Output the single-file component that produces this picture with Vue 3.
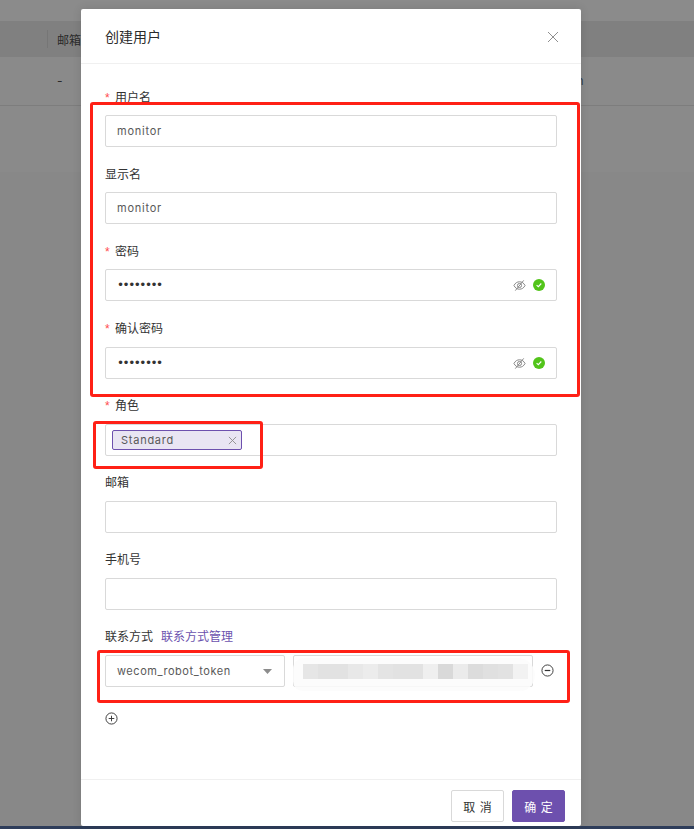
<script setup>
const blurBlocks = ['#e6e6e6','#e2e2e2','#e2e2e2','#e8e8e8','#ececec','#e4e4e4','#e2e2e2','#e2e2e2','#efefef','#d9d9d9','#ebebeb','#dcdcdc','#e0e0e0','#e2e2e2','#f2f2f2']
</script>

<template>
  <div class="page">
    <div class="bg">
      <div class="bg-top"></div>
      <div class="bg-head"><span class="bg-sep"></span><span>邮箱</span></div>
      <div class="bg-row"><span>-</span><span class="bg-tail">n</span></div>
      <div class="bg-empty"></div>
    </div>
    <div class="taskbar"></div>

    <section class="modal">
      <header class="modal-head">
        <h2>创建用户</h2>
        <svg class="close" viewBox="0 0 12 12" width="12" height="12"><path d="M1 1l10 10M11 1L1 11" stroke="#8f8f8f" stroke-width="1" fill="none"/></svg>
      </header>

      <div class="modal-body">
        <div class="field">
          <label class="req">用户名</label>
          <div class="input">monitor</div>
        </div>
        <div class="field">
          <label>显示名</label>
          <div class="input">monitor</div>
        </div>
        <div class="field tall">
          <label class="req">密码</label>
          <div class="input pass">
            <span class="dots">••••••••</span>
            <svg class="eye" viewBox="0 0 14 14" width="13" height="13"><path d="M1 7c1.5-2.8 3.500-4 6-4s4.500 1.200 6 4c-1.500 2.800-3.500 4-6 4s-4.500-1.200-6-4z" stroke="#808080" fill="none"/><circle cx="7" cy="7" r="2.200" stroke="#808080" fill="none"/><path d="M2.500 12.500L11.500 1.500" stroke="#808080" fill="none"/></svg>
            <svg class="ok" viewBox="0 0 12 12" width="12" height="12"><circle cx="6" cy="6" r="6" fill="#52c41a"/><path d="M3.600 6.100l1.700 1.600 3-3.200" stroke="#fff" stroke-width="1.100" fill="none"/></svg>
          </div>
        </div>
        <div class="field up">
          <label class="req">确认密码</label>
          <div class="input pass">
            <span class="dots">••••••••</span>
            <svg class="eye" viewBox="0 0 14 14" width="13" height="13"><path d="M1 7c1.5-2.8 3.500-4 6-4s4.500 1.200 6 4c-1.500 2.800-3.500 4-6 4s-4.500-1.200-6-4z" stroke="#808080" fill="none"/><circle cx="7" cy="7" r="2.200" stroke="#808080" fill="none"/><path d="M2.500 12.500L11.500 1.500" stroke="#808080" fill="none"/></svg>
            <svg class="ok" viewBox="0 0 12 12" width="12" height="12"><circle cx="6" cy="6" r="6" fill="#52c41a"/><path d="M3.600 6.100l1.700 1.600 3-3.200" stroke="#fff" stroke-width="1.100" fill="none"/></svg>
          </div>
        </div>
        <div class="field up">
          <label class="req">角色</label>
          <div class="input tagbox">
            <span class="tag">
              <span>Standard</span>
              <svg viewBox="0 0 10 10" width="9" height="9"><path d="M1 1l8 8M9 1L1 9" stroke="#8c8c8c" fill="none"/></svg>
            </span>
          </div>
        </div>
        <div class="field up">
          <label>邮箱</label>
          <div class="input"></div>
        </div>
        <div class="field up">
          <label>手机号</label>
          <div class="input"></div>
        </div>
        <div class="field contact up">
          <label>联系方式<a class="link">联系方式管理</a></label>
          <div class="contact-row">
            <div class="input select">
              <span>wecom_robot_token</span>
              <svg viewBox="0 0 9 5" width="9" height="5"><path d="M0 0h9L4.500 5z" fill="#8c8c8c"/></svg>
            </div>
            <div class="input token">
              <div class="blob"></div>
              <div class="blocks">
                <i v-for="(c, i) in blurBlocks" :key="i" :style="{ background: c }"></i>
              </div>
            </div>
            <svg class="round minus" viewBox="0 0 14 14" width="13" height="13"><circle cx="7" cy="7" r="6" stroke="#333" fill="none"/><path d="M4 7h6" stroke="#333" stroke-width="1.300"/></svg>
          </div>
        </div>
        <svg class="round add" viewBox="0 0 14 14" width="13" height="13"><circle cx="7" cy="7" r="6" stroke="#333" fill="none"/><path d="M4 7h6M7 4v6" stroke="#333"/></svg>
      </div>

      <footer class="modal-foot">
        <button class="btn">取 消</button>
        <button class="btn primary">确 定</button>
      </footer>
    </section>

    <div class="mark mark-a"></div>
    <div class="mark mark-b"></div>
    <div class="mark mark-c"></div>
  </div>
</template>

<style scoped>
.page {
  position: relative;
  width: 694px;
  height: 829px;
  overflow: hidden;
  background: #888;
  font-family: Inter, "Noto Sans CJK SC", sans-serif;
  font-size: 12px;
  color: #333;
}
.bg { display: flex; flex-direction: column; color: #2a2a2a; }
.bg-top { height: 21px; background: #8b8b8b; }
.bg-head {
  height: 36px; background: #808080; display: flex; align-items: center;
  padding-left: 47px; gap: 9px;
}
.bg-sep { width: 1px; height: 18px; background: #767676; }
.bg-row {
  height: 49px; background: #8a8a8a; border-bottom: 1px solid #7d7d7d;
  display: flex; align-items: center; padding: 0 0 2px 57px; position: relative;
  box-sizing: border-box;
}
.bg-tail { margin-left: 514px; color: #33404f; }
.bg-empty { height: 66px; background: #8a8a8a; }
.taskbar { position: absolute; left: 0; right: 0; bottom: 0; height: 3px; background: #2e3d5a; }

.modal {
  position: absolute; left: 81px; top: 9px; width: 500px; height: 817px;
  background: #fff; border-radius: 2px; display: flex; flex-direction: column;
  box-shadow: 0 0 10px rgba(0,0,0,.12);
}
.modal-head {
  height: 54px; flex: none; border-bottom: 1px solid #f0f0f0; box-sizing: content-box;
  display: flex; align-items: center; justify-content: space-between; padding: 0 22px 0 24px;
}
.modal-head h2 { margin: 0; font-size: 14px; font-weight: 400; color: #2b2b2b; }
.close { margin-top: 2px; }
.modal-body { flex: 1; padding: 21px 24px 0; display: flex; flex-direction: column; }
.field { margin-bottom: 15px; }
.field.tall { margin-bottom: 16px; }
.field label {
  display: flex; align-items: center; height: 22px; margin-bottom: 8px; font-size: 12px; color: #333; position: relative;
}
.field.up label { height: 20px; margin-bottom: 10px; }
.req::before {
  content: "*"; color: #ff4d4f; font-size: 12px; width: 10px; font-family: "Liberation Sans", sans-serif; padding-top: 3px;
}
.input {
  box-sizing: border-box; height: 32px; border: 1px solid #d9d9d9; border-radius: 2px;
  padding: 0 11px; display: flex; align-items: center; font-size: 11px; letter-spacing: .75px; color: #595959;
}
.pass .dots { flex: 1; color: #333; font-size: 12px; letter-spacing: -1.500px; font-family: "DejaVu Sans", sans-serif; }
.eye { margin-right: 7px; }
.tagbox { padding: 0 6px; }
.tag {
  box-sizing: border-box; width: 130px; height: 20px; background: #e9e5f3; border: 1px solid #6d50ae; border-radius: 2px;
  display: flex; align-items: center; justify-content: space-between; padding: 0 4px 0 8px;
}
.link { color: #6b52ae; margin-left: 8px; }
.contact { margin-bottom: 0; }
.contact-row { display: flex; align-items: center; }
.select { width: 180px; justify-content: space-between; flex: none; letter-spacing: .55px; padding-right: 12px; }
.token { width: 240px; margin-left: 8px; flex: none; padding: 0; position: relative; }
.blob {
  position: absolute; left: -1px; right: -3px; top: 2px; bottom: -5px; background: rgba(251,251,251,.85); border-radius: 14px 22px 20px 12px;
}
.blocks { position: absolute; left: 9px; top: 8px; height: 15px; display: flex; }
.blocks i { display: block; width: 15px; height: 15px; }
.round { flex: none; }
.minus { margin-left: 8px; margin-top: -2px; }
.add { margin: 25px 0 0; }
.modal-foot {
  flex: none; box-sizing: border-box; height: 47px; border-top: 1px solid #f0f0f0; display: flex; justify-content: flex-end; align-items: flex-start;
  gap: 8px; padding: 10px 16px 0;
}
.btn {
  width: 53px; height: 32px; border: 1px solid #d9d9d9; border-radius: 2px; background: #fff; font: inherit;
  font-size: 12px; word-spacing: 1px; color: #333; padding: 0;
}
.primary { background: #6d50ae; border-color: #6d50ae; color: #fff; }

.mark { position: absolute; border: 3px solid #ff2016; border-radius: 3px; box-sizing: border-box; }
.mark-a { left: 90px; top: 102px; width: 490px; height: 295px; }
.mark-b { left: 93px; top: 421px; width: 170px; height: 48px; }
.mark-c { left: 97px; top: 650px; width: 473px; height: 53px; }
</style>
